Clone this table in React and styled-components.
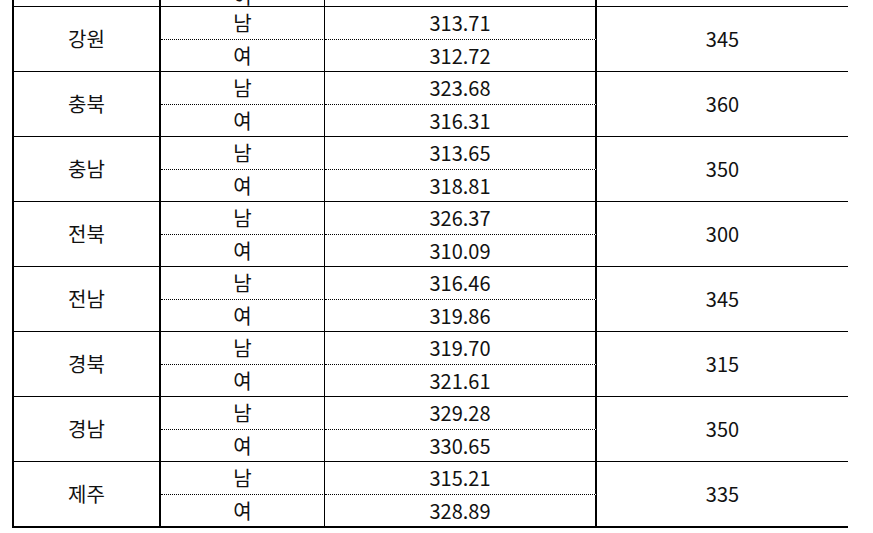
import React from 'react';
import styled, { createGlobalStyle } from 'styled-components';

const GlobalStyle = createGlobalStyle`
  html, body {
    margin: 0;
    padding: 0;
    background: #ffffff;
  }
  body {
    font-family: "Noto Sans CJK KR", "Noto Sans", sans-serif;
    color: #111;
  }
`;

const rows = [
  { region: '강원', male: '313.71', female: '312.72', quota: '345' },
  { region: '충북', male: '323.68', female: '316.31', quota: '360' },
  { region: '충남', male: '313.65', female: '318.81', quota: '350' },
  { region: '전북', male: '326.37', female: '310.09', quota: '300' },
  { region: '전남', male: '316.46', female: '319.86', quota: '345' },
  { region: '경북', male: '319.70', female: '321.61', quota: '315' },
  { region: '경남', male: '329.28', female: '330.65', quota: '350' },
  { region: '제주', male: '315.21', female: '328.89', quota: '335' },
];

const Page = styled.div`
  width: 873px;
  height: 533px;
  overflow: hidden;
  padding-left: 12px;
  box-sizing: border-box;
`;

const Table = styled.div`
  width: 836px;
  border-left: 2px solid #000;
  border-bottom: 2px solid #000;
  box-sizing: border-box;
`;

const Grid = styled.div`
  display: grid;
  grid-template-columns: 147px 164px 272px 251px;
  grid-template-rows: ${p => p.$rows};
  border-top: ${p => (p.$open ? 'none' : '1px solid #000')};
  font-size: 20px;
  line-height: 20px;
`;

const Cell = styled.div`
  box-sizing: border-box;
  display: flex;
  justify-content: center;
  align-items: ${p => (p.$bottom ? 'flex-end' : 'center')};
  overflow: hidden;
  grid-row: ${p => (p.$span ? 'span 2' : 'auto')};
  border-right: ${p => (p.$rule ? `${p.$rule}px solid #000` : 'none')};
  border-bottom: ${p => (p.$dotted ? '1px dotted #000' : 'none')};
`;

const Label = styled.span`
  letter-spacing: 0;
`;

const Group = ({ region, male, female, quota }) => (
  <Grid $rows="33px 31px">
    <Cell $span $rule={2}><Label>{region}</Label></Cell>
    <Cell $rule={1} $dotted>남</Cell>
    <Cell $rule={2} $dotted>{male}</Cell>
    <Cell $span>{quota}</Cell>
    <Cell $rule={1}>여</Cell>
    <Cell $rule={2}>{female}</Cell>
  </Grid>
);

// bottom edge of the row above, cut by the window
const Tail = () => (
  <Grid $rows="6px" $open>
    <Cell $rule={2} />
    <Cell $rule={1} $bottom>여</Cell>
    <Cell $rule={2} />
    <Cell />
  </Grid>
);

export default function App() {
  return (
    <Page>
      <GlobalStyle />
      <Table>
        <Tail />
        {rows.map(r => (
          <Group key={r.region} {...r} />
        ))}
      </Table>
    </Page>
  );
}
